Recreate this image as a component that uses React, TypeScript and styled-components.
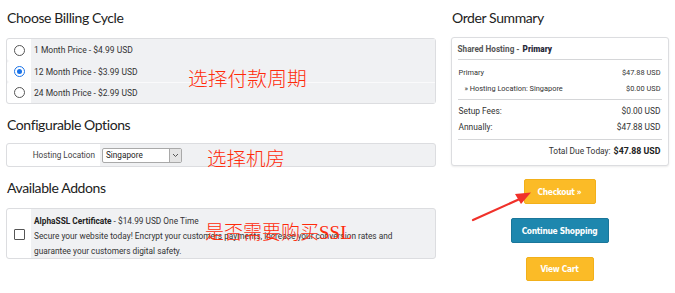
import React from "react";
import styled, { createGlobalStyle } from "styled-components";

const Global = createGlobalStyle`
  html, body { margin: 0; padding: 0; background: #fff; }
  body { font-family: Roboto, "Liberation Sans", sans-serif; color: #333; }
  * { box-sizing: border-box; }
`;

const Page = styled.div`
  position: relative;
  width: 675px;
  height: 293px;
  display: flex;
  padding: 8px 0 0 6px;
  gap: 14px;
`;

const LeftCol = styled.div`
  width: 430px;
  display: flex;
  flex-direction: column;
`;

const RightCol = styled.div`
  width: 218px;
  display: flex;
  flex-direction: column;
  align-items: center;
  padding-left: 1px;
`;

const Heading = styled.h2<{ $mt?: number; $mb?: number }>`
  margin: ${(p) => p.$mt ?? 0}px 0 ${(p) => p.$mb ?? 10}px 1px;
  font-family: Lato, "Open Sans", sans-serif;
  font-weight: 400;
  font-size: 14px;
  letter-spacing: -0.4px;
  line-height: 20px;
  color: #222;
  align-self: stretch;
`;

const Panel = styled.div`
  position: relative;
  border: 1px solid #dcdde0;
  border-radius: 3px;
  background: #f0f1f3;
`;

const RadioRow = styled.label<{ $h: number }>`
  display: flex;
  height: ${(p) => p.$h}px;
  align-items: stretch;
  & + & > div:last-child { border-top: 1px solid #fafafb; }
`;

const SideCell = styled.div<{ $w: number }>`
  width: ${(p) => p.$w}px;
  flex: none;
  display: flex;
  align-items: center;
  justify-content: center;
  background: #fff;
  border-radius: 3px 0 0 3px;
`;

const GrayCell = styled.div`
  flex: 1;
  display: flex;
  align-items: center;
  background: #f0f1f3;
  padding-left: 3px;
  font-size: 8.5px;
  color: #333;
`;

const Radio = styled.span<{ $on?: boolean }>`
  width: 11px;
  height: 11px;
  border-radius: 50%;
  border: 1px solid ${(p) => (p.$on ? "#1a73e8" : "#555")};
  display: flex;
  align-items: center;
  justify-content: center;
  &::after {
    content: "";
    width: 5px;
    height: 5px;
    border-radius: 50%;
    background: ${(p) => (p.$on ? "#1a73e8" : "transparent")};
  }
`;

const ConfigRow = styled.div`
  display: flex;
  height: 22px;
`;

const ConfigLabel = styled.div`
  width: 93px;
  flex: none;
  display: flex;
  align-items: center;
  justify-content: flex-end;
  padding-right: 5px;
  font-size: 8.2px;
  color: #444;
  background: #fff;
  border-radius: 3px 0 0 3px;
`;

const ConfigField = styled.div`
  flex: 1;
  display: flex;
  align-items: center;
  padding-left: 2px;
`;

const Select = styled.div`
  width: 80px;
  height: 15px;
  border: 1px solid #a9a9a9;
  border-radius: 2px;
  background: #fff;
  display: flex;
  font-size: 8.2px;
  color: #222;
`;

const SelectText = styled.span`
  flex: 1;
  padding-left: 3px;
  display: flex;
  align-items: center;
`;

const SelectBtn = styled.span`
  width: 12px;
  border-left: 1px solid #a9a9a9;
  background: #e4e4e4;
  display: flex;
  align-items: center;
  justify-content: center;
`;

const AddonRow = styled.div`
  display: flex;
  height: 49px;
`;

const Checkbox = styled.span`
  width: 11px;
  height: 11px;
  border: 1px solid #555;
  border-radius: 1px;
  background: #fff;
  margin-top: 2px;
`;

const AddonBody = styled.div`
  flex: 1;
  padding: 5px 0 0 3px;
  font-size: 8.3px;
  line-height: 15px;
  color: #333;
`;

const AddonTitle = styled.div`
  line-height: 15px;
  b { font-weight: 700; color: #222; }
`;

const Annotation = styled.div<{ $x: number; $y: number; $size: number }>`
  position: absolute;
  left: ${(p) => p.$x}px;
  top: ${(p) => p.$y}px;
  font-family: "Noto Sans CJK SC", sans-serif;
  font-weight: 300;
  font-size: ${(p) => p.$size}px;
  line-height: 1.2;
  color: #ff2a0a;
  white-space: nowrap;
  pointer-events: none;
  span { font-family: "Liberation Serif", serif; font-weight: 400; }
`;

const Summary = styled.div`
  width: 218px;
  border: 1px solid #dcdde0;
  border-radius: 3px;
  box-shadow: 0 1px 2px rgba(0,0,0,0.08);
  padding: 0 6px 3px;
  background: #fff;
  margin-bottom: 13px;
`;

const SumTitle = styled.div`
  height: 22px;
  display: flex;
  align-items: center;
  font-size: 8.2px;
  font-weight: 700;
  color: #555;
  border-bottom: 1px solid #d5d6d8;
  b { color: #2a2a3a; margin-left: 3px; }
`;

const Lines = styled.div`
  padding: 4px 1px 0 1px;
  border-bottom: 1px solid #d5d6d8;
  height: 40px;
`;

const LineRow = styled.div<{ $indent?: number; $size?: number }>`
  display: flex;
  justify-content: space-between;
  align-items: center;
  height: 16px;
  padding-left: ${(p) => p.$indent ?? 0}px;
  font-size: ${(p) => p.$size ?? 7.4}px;
  color: #333;
`;

const Totals = styled.div`
  padding: 3px 1px 0 1px;
  border-bottom: 1px solid #d5d6d8;
  height: 40px;
`;

const DueRow = styled.div`
  height: 22px;
  display: flex;
  align-items: center;
  justify-content: flex-end;
  padding-right: 1px;
  font-size: 8.4px;
  color: #333;
  b { font-weight: 700; color: #222; margin-left: 3px; font-size: 8.8px; }
`;

const Button = styled.div<{ $w: number; $h?: number; $blue?: boolean; $mb?: number }>`
  width: ${(p) => p.$w}px;
  height: ${(p) => p.$h ?? 25}px;
  margin-bottom: ${(p) => p.$mb ?? 14}px;
  border-radius: 2px;
  background: ${(p) => (p.$blue ? "#1e87ae" : "#fbbb27")};
  border: 1px solid ${(p) => (p.$blue ? "#1a769a" : "#f2b01a")};
  color: #fff;
  display: flex;
  align-items: center;
  justify-content: center;
  font-family: "DejaVu Sans Condensed", "DejaVu Sans", sans-serif;
  font-stretch: condensed;
  font-weight: 700;
  font-size: 8.4px;
  letter-spacing: -0.3px;
`;

const ArrowSvg = styled.svg`
  position: absolute;
  left: 470px;
  top: 183px;
  pointer-events: none;
`;

const Chevron = () => (
  <svg width="7" height="5" viewBox="0 0 7 5">
    <path d="M1 1 L3.5 3.5 L6 1" fill="none" stroke="#555" strokeWidth="1" />
  </svg>
);

export default function App() {
  const cycles = [
    { t: "1 Month Price - $4.99 USD", on: false, h: 22 },
    { t: "12 Month Price - $3.99 USD", on: true, h: 21 },
    { t: "24 Month Price - $2.99 USD", on: false, h: 21 },
  ];
  return (
    <>
      <Global />
      <Page>
        <LeftCol>
          <Heading>Choose Billing Cycle</Heading>
          <Panel>
            {cycles.map((c) => (
              <RadioRow key={c.t} $h={c.h}>
                <SideCell $w={24}>
                  <Radio $on={c.on} />
                </SideCell>
                <GrayCell>{c.t}</GrayCell>
              </RadioRow>
            ))}
            <Annotation $x={181} $y={27} $size={19.8}>选择付款周期</Annotation>
          </Panel>

          <Heading $mt={11} $mb={8}>Configurable Options</Heading>
          <Panel>
            <ConfigRow>
              <ConfigLabel>Hosting Location</ConfigLabel>
              <ConfigField>
                <Select>
                  <SelectText>Singapore</SelectText>
                  <SelectBtn>
                    <Chevron />
                  </SelectBtn>
                </Select>
              </ConfigField>
            </ConfigRow>
            <Annotation $x={200} $y={2} $size={19.5}>选择机房</Annotation>
          </Panel>

          <Heading $mt={11}>Available Addons</Heading>
          <Panel>
            <AddonRow>
              <SideCell $w={24}>
                <Checkbox />
              </SideCell>
              <AddonBody>
                <AddonTitle>
                  <b>AlphaSSL Certificate</b> - $14.99 USD One Time
                </AddonTitle>
                <div>Secure your website today! Encrypt your customers payments, increase your conversion rates and</div>
                <div>guarantee your customers digital safety.</div>
              </AddonBody>
            </AddonRow>
            <Annotation $x={198} $y={11} $size={19}>
              是否需要购买<span>SSL</span>
            </Annotation>
          </Panel>
        </LeftCol>

        <RightCol>
          <Heading $mb={9}>Order Summary</Heading>
          <Summary>
            <SumTitle>
              Shared Hosting - <b>Primary</b>
            </SumTitle>
            <Lines>
              <LineRow>
                <span>Primary</span>
                <span>$47.88 USD</span>
              </LineRow>
              <LineRow $indent={6}>
                <span>» Hosting Location: Singapore</span>
                <span>$0.00 USD</span>
              </LineRow>
            </Lines>
            <Totals>
              <LineRow $size={8.4}>
                <span>Setup Fees:</span>
                <span>$0.00 USD</span>
              </LineRow>
              <LineRow $size={8.4}>
                <span>Annually:</span>
                <span>$47.88 USD</span>
              </LineRow>
            </Totals>
            <DueRow>
              Total Due Today: <b>$47.88 USD</b>
            </DueRow>
          </Summary>
          <Button $w={72}>Checkout »</Button>
          <Button $w={98} $blue>Continue Shopping</Button>
          <Button $w={68} $h={24} $mb={0}>View Cart</Button>
        </RightCol>

        <ArrowSvg width="70" height="45" viewBox="0 0 70 45">
          <path d="M3 37 L52 15" stroke="#f0312a" strokeWidth="2.2" strokeLinecap="round" />
          <path d="M61 9.5 L45 11 L51 21 Z" fill="#f0312a" />
        </ArrowSvg>
      </Page>
    </>
  );
}
